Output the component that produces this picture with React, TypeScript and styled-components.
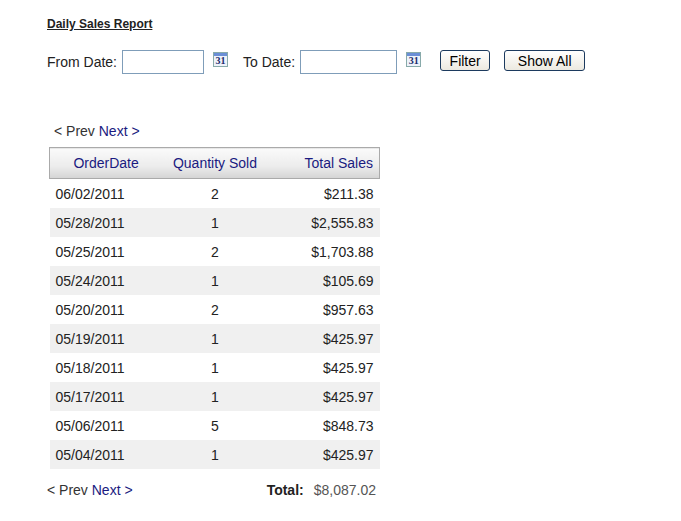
import React from 'react';
import styled, { createGlobalStyle } from 'styled-components';

const Global = createGlobalStyle`
  body { margin: 0; background: #fff; font-family: "Liberation Sans", Arial, sans-serif; color: #222; }
`;

const Page = styled.div`
  padding: 17px 0 0 47px;
  font-size: 14px;
`;

const Title = styled.div`
  font-size: 12px;
  line-height: 14px;
  font-weight: bold;
  text-decoration: underline;
  color: #222;
`;

const FilterRow = styled.div`
  display: flex;
  align-items: center;
  margin-top: 19px;
  height: 24px;
`;

const Label = styled.span<{ $ml?: number }>`
  margin-left: ${p => p.$ml ?? 0}px;
  margin-right: 5px;
`;

const DateInput = styled.input<{ $w: number }>`
  width: ${p => p.$w}px;
  height: 24px;
  box-sizing: border-box;
  border: 1px solid #7f9db9;
  padding: 0 3px;
`;

const CalIcon = styled.span`
  display: inline-block;
  width: 15px;
  height: 15px;
  margin-left: 9px;
  margin-top: -5px;
  border: 1px solid #8aa;
  box-sizing: border-box;
  font: bold 10px "Liberation Serif", serif;
  color: #1a2a6a;
  line-height: 11px;
  text-align: center;
  background: linear-gradient(#6b8fd6 0 3px, #eef2fa 3px);
  padding-top: 2px;
`;

const Spacer = styled.div`
  height: 49px;
`;

const Button = styled.button<{ $w: number; $ml: number }>`
  width: ${p => p.$w}px;
  height: 21px;
  margin-left: ${p => p.$ml}px;
  margin-top: -3px;
  font: 14px "Liberation Sans", Arial, sans-serif;
  color: #000;
  border: 1px solid #1c3a5e;
  border-radius: 3px;
  background: linear-gradient(#fff, #ece9e0);
  padding: 0;
`;

const Pager = styled.div<{ $ml: number }>`
  margin-left: ${p => p.$ml}px;
  color: #333;
  line-height: 16px;
`;

const NextLink = styled.a`
  color: #1a1a80;
  text-decoration: none;
`;

const Table = styled.table`
  border-collapse: collapse;
  width: 331px;
  margin: 8px 0 0 2px;
  font-size: 14px;
`;

const Th = styled.th<{ $align: string; $w: number }>`
  width: ${p => p.$w}px;
  height: 30px;
  padding: 0 6px;
  font-weight: normal;
  text-align: ${p => p.$align};
  color: #1a1a80;
  background: linear-gradient(#fafafa, #ececec 60%, #d4d4d4);
  border-top: 1px solid #aaa;
  border-bottom: 1px solid #aaa;
  &:first-child { border-left: 1px solid #aaa; }
  &:last-child { border-right: 1px solid #aaa; }
`;

const Tr = styled.tr<{ $alt: boolean }>`
  background: ${p => (p.$alt ? '#f0f0f0' : '#fff')};
`;

const Td = styled.td<{ $align: string }>`
  height: 29px;
  padding: 0 6px;
  text-align: ${p => p.$align};
  color: #222;
`;

const Footer = styled.div`
  display: flex;
  align-items: center;
  width: 329px;
  margin-top: 13px;
`;

const TotalLabel = styled.span`
  margin-left: auto;
  font-weight: bold;
  color: #222;
  margin-right: 10px;
`;

const TotalValue = styled.span`
  color: #555;
`;

const rows = [
  ['06/02/2011', '2', '$211.38'],
  ['05/28/2011', '1', '$2,555.83'],
  ['05/25/2011', '2', '$1,703.88'],
  ['05/24/2011', '1', '$105.69'],
  ['05/20/2011', '2', '$957.63'],
  ['05/19/2011', '1', '$425.97'],
  ['05/18/2011', '1', '$425.97'],
  ['05/17/2011', '1', '$425.97'],
  ['05/06/2011', '5', '$848.73'],
  ['05/04/2011', '1', '$425.97'],
];

const PagerLinks = () => (
  <>
    &lt; Prev <NextLink href="#">Next &gt;</NextLink>
  </>
);

export default function App() {
  return (
    <Page>
      <Global />
      <Title>Daily Sales Report</Title>
      <FilterRow>
        <Label>From Date:</Label>
        <DateInput $w={82} />
        <CalIcon>31</CalIcon>
        <Label $ml={15}>To Date:</Label>
        <DateInput $w={97} />
        <CalIcon>31</CalIcon>
        <Button $w={50} $ml={19}>Filter</Button>
        <Button $w={81} $ml={14}>Show All</Button>
      </FilterRow>
      <Spacer />
      <Pager $ml={7}><PagerLinks /></Pager>
      <Table>
        <thead>
          <tr>
            <Th $align="center" $w={111}>OrderDate</Th>
            <Th $align="center" $w={108}>Quantity Sold</Th>
            <Th $align="right" $w={112}>Total Sales</Th>
          </tr>
        </thead>
        <tbody>
          {rows.map((r, i) => (
            <Tr key={i} $alt={i % 2 === 1}>
              <Td $align="left">{r[0]}</Td>
              <Td $align="center">{r[1]}</Td>
              <Td $align="right">{r[2]}</Td>
            </Tr>
          ))}
        </tbody>
      </Table>
      <Footer>
        <Pager $ml={0}><PagerLinks /></Pager>
        <TotalLabel>Total:</TotalLabel>
        <TotalValue>$8,087.02</TotalValue>
      </Footer>
    </Page>
  );
}
